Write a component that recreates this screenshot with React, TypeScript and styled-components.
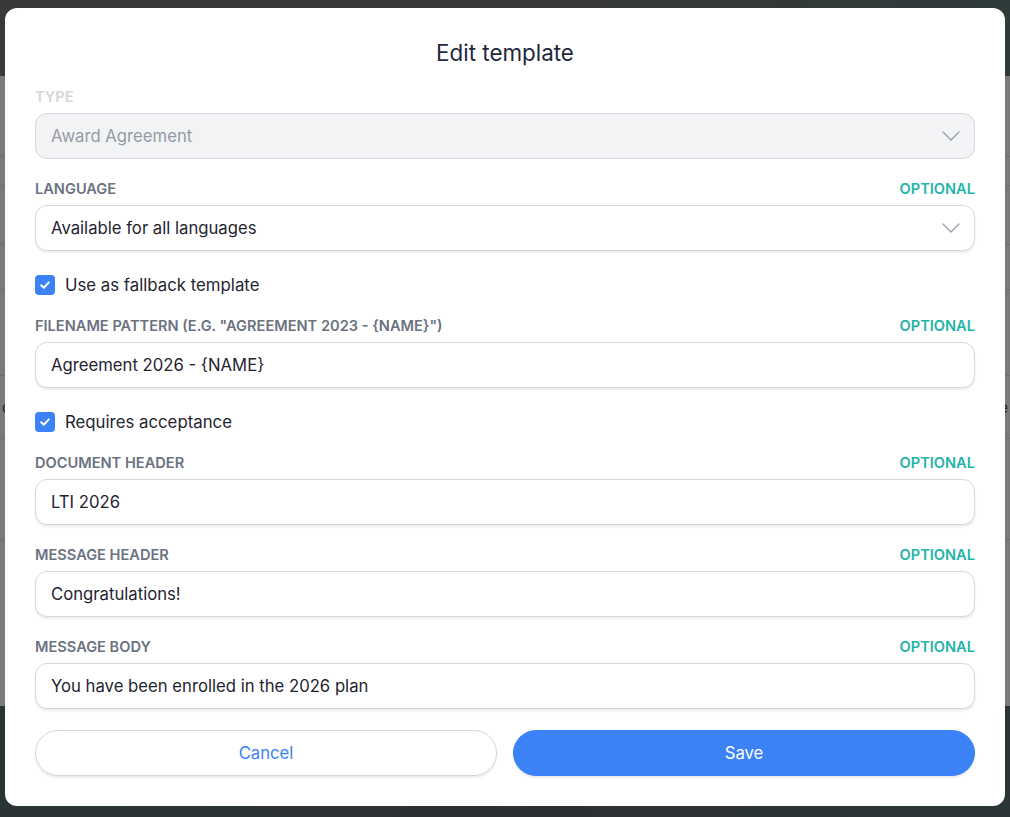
import React from 'react'
import styled, { createGlobalStyle } from 'styled-components'

const GlobalStyle = createGlobalStyle`
  html, body {
    margin: 0;
    padding: 0;
    height: 100%;
  }
  body {
    font-family: Inter, 'Noto Sans', 'Liberation Sans', sans-serif;
    background: #333;
  }
`

// the page sitting behind the dialog, already dimmed by the overlay
const Backdrop = styled.div`
  position: relative;
  width: 1010px;
  height: 817px;
  display: flex;
  flex-direction: column;
  overflow: hidden;
`

const TopBar = styled.div`
  height: 76px;
  background: linear-gradient(90deg, #393939 0%, #363838 60%, #2f3a3a 100%);
`

const PageBody = styled.div`
  flex: 1;
  background: #7a7a7a;
  display: flex;
  flex-direction: column;
`

const PageRow = styled.div<{ $h: number }>`
  height: ${({ $h }) => $h}px;
  border-bottom: 1px solid #6e6e6e;
  display: flex;
  align-items: center;
  justify-content: space-between;
  padding: 0 2px;
  font-size: 15px;
  color: #222;
`

const BottomBar = styled.div`
  height: 111px;
  background: linear-gradient(90deg, #2a3434 0%, #2c2f33 50%, #2b3535 100%);
`

const Dialog = styled.div`
  position: absolute;
  left: 5px;
  top: 8px;
  width: 1000px;
  height: 798px;
  box-sizing: border-box;
  background: #fff;
  border-radius: 12px;
  padding: 30px 30px 30px;
  display: flex;
  flex-direction: column;
`

const Title = styled.h2`
  margin: 0 0 21px;
  height: 30px;
  line-height: 30px;
  text-align: center;
  font-size: 22.4px;
  font-weight: 400;
  color: #1e293b;
`

const Form = styled.div`
  display: flex;
  flex-direction: column;
  gap: 22px;
`

const Field = styled.div`
  display: flex;
  flex-direction: column;
  gap: 8px;
`

const LabelRow = styled.div`
  height: 16px;
  display: flex;
  align-items: center;
  justify-content: space-between;
`

const Label = styled.label<{ $disabled?: boolean }>`
  font-size: 14.6px;
  font-weight: 600;
  text-transform: uppercase;
  color: ${({ $disabled }) => ($disabled ? '#d4d6db' : '#6b7280')};
`

const Optional = styled.span`
  font-size: 14.6px;
  font-weight: 600;
  color: #1fb5a8;
`

const Box = styled.div<{ $disabled?: boolean }>`
  height: 46px;
  box-sizing: border-box;
  border: 1px solid #d5d7dd;
  border-radius: 12px;
  background: ${({ $disabled }) => ($disabled ? '#f2f3f5' : '#fff')};
  box-shadow: ${({ $disabled }) => ($disabled ? 'none' : '0 2px 2px rgba(15, 23, 42, 0.08)')};
  display: flex;
  align-items: center;
  justify-content: space-between;
  padding: 0 14px 0 15px;
  font-size: 16.7px;
  color: ${({ $disabled }) => ($disabled ? '#959aa5' : '#1f2430')};
`

const Chevron = styled.svg`
  width: 18px;
  height: 10px;
  flex: none;
`

const CheckRow = styled.label`
  height: 23px;
  display: flex;
  align-items: center;
  gap: 10px;
  font-size: 16.8px;
  color: #1f2430;
`

const CheckBox = styled.span`
  width: 20px;
  height: 20px;
  border-radius: 4px;
  background: #3b82f6;
  display: flex;
  align-items: center;
  justify-content: center;
`

const Footer = styled.div`
  margin-top: 21px;
  display: grid;
  grid-template-columns: 1fr 1fr;
  gap: 16px;
`

const Button = styled.button<{ $primary?: boolean }>`
  height: 46px;
  border-radius: 23px;
  font-family: inherit;
  font-size: 16.7px;
  cursor: pointer;
  border: 1px solid ${({ $primary }) => ($primary ? '#3b82f6' : '#d5d7dd')};
  background: ${({ $primary }) => ($primary ? '#3b82f6' : '#fff')};
  color: ${({ $primary }) => ($primary ? '#fff' : '#3b82f6')};
  box-shadow: 0 2px 2px rgba(15, 23, 42, 0.08);
`

function ChevronDown() {
  return (
    <Chevron viewBox="0 0 18 10">
      <polyline points="1,1 9,9 17,1" fill="none" stroke="#9aa0ab" strokeWidth="1.4" strokeLinecap="round" strokeLinejoin="round" />
    </Chevron>
  )
}

function Checked({ children }: { children: React.ReactNode }) {
  return (
    <CheckRow>
      <CheckBox>
        <svg width="12" height="12" viewBox="0 0 12 12">
          <polyline points="2.2,6.3 4.8,8.8 9.8,3.4" fill="none" stroke="#fff" strokeWidth="2" strokeLinecap="round" strokeLinejoin="round" />
        </svg>
      </CheckBox>
      {children}
    </CheckRow>
  )
}

interface TextFieldProps {
  label: string
  value: string
  optional?: boolean
}

function TextField({ label, value, optional }: TextFieldProps) {
  return (
    <Field>
      <LabelRow>
        <Label>{label}</Label>
        {optional && <Optional>OPTIONAL</Optional>}
      </LabelRow>
      <Box>{value}</Box>
    </Field>
  )
}

const bgRows = [
  { h: 80, l: '', r: '' },
  { h: 28, l: '', r: '' },
  { h: 58, l: '', r: '' },
  { h: 44, l: '', r: '' },
  { h: 85, l: '', r: '' },
  { h: 62, l: 'c', r: 'e' },
  { h: 100, l: '', r: '' },
]

export default function App() {
  return (
    <>
      <GlobalStyle />
      <Backdrop>
        <TopBar />
        <PageBody>
          {bgRows.map((row, i) => (
            <PageRow key={i} $h={row.h}>
              <span>{row.l}</span>
              <span>{row.r}</span>
            </PageRow>
          ))}
        </PageBody>
        <BottomBar />

        <Dialog>
          <Title>Edit template</Title>
          <Form>
            <Field>
              <LabelRow>
                <Label $disabled>Type</Label>
              </LabelRow>
              <Box $disabled>
                Award Agreement
                <ChevronDown />
              </Box>
            </Field>
            <Field>
              <LabelRow>
                <Label>Language</Label>
                <Optional>OPTIONAL</Optional>
              </LabelRow>
              <Box>
                Available for all languages
                <ChevronDown />
              </Box>
            </Field>
            <Checked>Use as fallback template</Checked>
            <TextField label={'Filename pattern (e.g. "Agreement 2023 - {name}")'} value="Agreement 2026 - {NAME}" optional />
            <Checked>Requires acceptance</Checked>
            <TextField label="Document header" value="LTI 2026" optional />
            <TextField label="Message header" value="Congratulations!" optional />
            <TextField label="Message body" value="You have been enrolled in the 2026 plan" optional />
          </Form>
          <Footer>
            <Button>Cancel</Button>
            <Button $primary>Save</Button>
          </Footer>
        </Dialog>
      </Backdrop>
    </>
  )
}
